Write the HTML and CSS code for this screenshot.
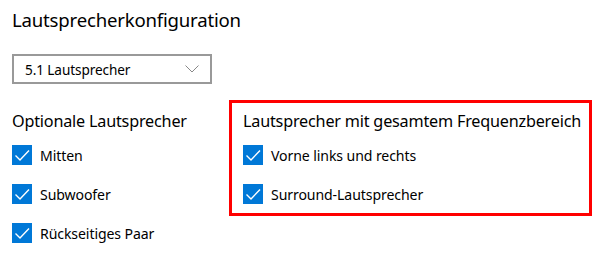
FILE: index.html
```html
<!DOCTYPE html>
<html lang="de">
<head>
    <meta charset="UTF-8">
    <title>Lautsprecherkonfiguration</title>
    <link rel="stylesheet" href="styles.css">
</head>
<body>
    <div class="page">
        <h1>Lautsprecherkonfiguration</h1>

        <div class="dropdown">
            <span>5.1 Lautsprecher</span>
            <svg class="chevron" width="14" height="8" viewBox="0 0 14 8">
                <path d="M0.5 0.5 L7 7 L13.5 0.5" fill="none" stroke="#888" stroke-width="1"/>
            </svg>
        </div>

        <div class="groups">
            <div class="group">
                <h2>Optionale Lautsprecher</h2>
                <label class="check"><span class="box"><svg width="20" height="20" viewBox="0 0 20 20"><path d="M3.5 10.5 L8 15 L17 5.5" fill="none" stroke="#fff" stroke-width="1.4"/></svg></span>Mitten</label>
                <label class="check"><span class="box"><svg width="20" height="20" viewBox="0 0 20 20"><path d="M3.5 10.5 L8 15 L17 5.5" fill="none" stroke="#fff" stroke-width="1.4"/></svg></span>Subwoofer</label>
                <label class="check"><span class="box"><svg width="20" height="20" viewBox="0 0 20 20"><path d="M3.5 10.5 L8 15 L17 5.5" fill="none" stroke="#fff" stroke-width="1.4"/></svg></span>Rückseitiges Paar</label>
            </div>

            <div class="group highlighted">
                <h2>Lautsprecher mit gesamtem Frequenzbereich</h2>
                <label class="check"><span class="box"><svg width="20" height="20" viewBox="0 0 20 20"><path d="M3.5 10.5 L8 15 L17 5.5" fill="none" stroke="#fff" stroke-width="1.4"/></svg></span>Vorne links und rechts</label>
                <label class="check"><span class="box"><svg width="20" height="20" viewBox="0 0 20 20"><path d="M3.5 10.5 L8 15 L17 5.5" fill="none" stroke="#fff" stroke-width="1.4"/></svg></span>Surround-Lautsprecher</label>
            </div>
        </div>
    </div>
</body>
</html>
```

FILE: styles.css
```css
body {
    margin: 0;
    background: #fff;
    color: #000;
    font-family: "Noto Sans", "Open Sans", sans-serif;
}
.page {
    padding: 7px 0 0 12px;
}
h1 {
    font-size: 18.6px;
    font-weight: normal;
    margin: 0 0 21px 0;
    line-height: 26px;
    letter-spacing: -0.2px;
}
.dropdown {
    box-sizing: border-box;
    width: 200px;
    height: 30px;
    border: 2px solid #999;
    display: flex;
    align-items: center;
    justify-content: space-between;
    padding: 0 11px 0 11px;
    font-size: 13.6px;
    letter-spacing: -0.1px;
}
.chevron {
    display: block;
}
.groups {
    display: flex;
    margin-top: 16px;
}
.group {
    flex: none;
    width: 217px;
    padding-top: 3px;
}
.group.highlighted {
    width: 363px;
    box-sizing: border-box;
    padding: 0 11px 0 11px;
    height: 116px;
    border: 3px solid #f00;
    white-space: nowrap;
}
h2 {
    font-size: 16.2px;
    font-weight: normal;
    margin: 0;
    line-height: 24px;
    padding-top: 6px;
    letter-spacing: -0.2px;
}
.check {
    display: flex;
    align-items: center;
    height: 20px;
    margin-top: 19px;
    font-size: 14.1px;
    letter-spacing: -0.1px;
}
.group h2 + .check {
    margin-top: 12px;
}
.box {
    width: 20px;
    height: 20px;
    background: #0078d7;
    margin-right: 8px;
    flex: none;
}
.box svg {
    display: block;
}
```
